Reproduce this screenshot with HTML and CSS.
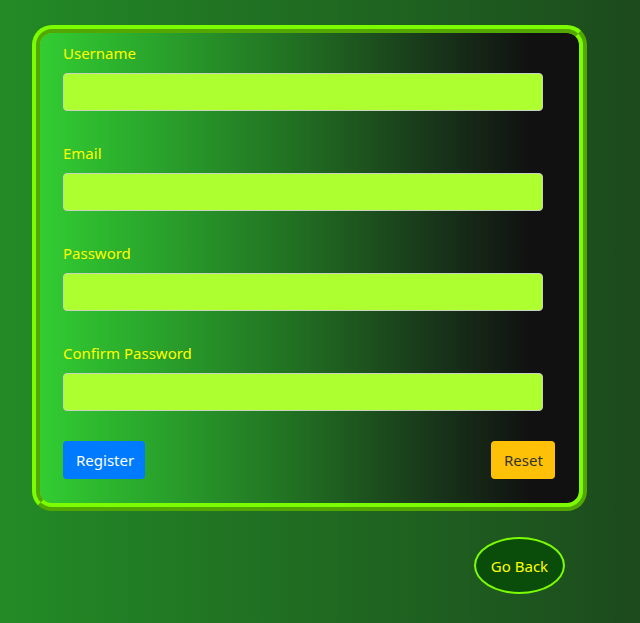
FILE: index.html
```html
<!DOCTYPE html>
<html>
<head>
<meta charset="utf-8">
<link rel="stylesheet" href="styles.css">
</head>
<body>
<div class="page">
  <form class="card">
    <label class="label">Username</label>
    <input class="field" type="text">
    <label class="label">Email</label>
    <input class="field" type="email">
    <label class="label">Password</label>
    <input class="field" type="password">
    <label class="label">Confirm Password</label>
    <input class="field" type="password">
    <div class="actions">
      <button type="button" class="btn btn-register">Register</button>
      <button type="button" class="btn btn-reset">Reset</button>
    </div>
  </form>
  <div class="back-row">
    <button type="button" class="back">Go Back</button>
  </div>
</div>
</body>
</html>
```
FILE: styles.css
```css
html, body {
  margin: 0;
  padding: 0;
  height: 100%;
}
body {
  background: linear-gradient(to right, #238b26, #1c4a1d);
  font-family: "Noto Sans", "Open Sans", sans-serif;
  font-size: 15px;
}
.page {
  padding: 25px 0 0 32px;
}
.card {
  box-sizing: border-box;
  width: 555px;
  height: 486px;
  border: 8px ridge #7cfc00;
  border-radius: 20px;
  background: linear-gradient(to right, #32cd32 0%, #2aa52c 21%, #216e22 48%, #183419 74%, #111 91%, #111 100%);
  padding: 10px 24px 0 23px;
  display: flex;
  flex-direction: column;
  align-items: flex-start;
}
.label {
  color: #ffff00;
  line-height: 20px;
  height: 20px;
  margin-bottom: 10px;
}
.field {
  box-sizing: border-box;
  width: 480px;
  height: 38px;
  margin: 0 0 32px 0;
  background: #adff2f;
  border: 1px solid #c8d2c0;
  border-radius: 4px;
  padding: 0 10px;
}
.field:last-of-type {
  margin-bottom: 30px;
}
.actions {
  display: flex;
  justify-content: space-between;
  width: 100%;
}
.btn {
  height: 38px;
  border: 1px solid transparent;
  border-radius: 4px;
  font-family: inherit;
  font-size: 15px;
  padding: 0 12px;
}
.btn-register {
  width: 82px;
  background: #007bff;
  color: #fff;
}
.btn-reset {
  width: 64px;
  background: #ffc107;
  color: #333;
}
.back-row {
  padding: 26px 0 0 442px;
}
.back {
  width: 91px;
  height: 57px;
  border-radius: 50%;
  border: 2px solid #7cfc00;
  background: #0a4d0a;
  color: #ffff00;
  font-family: inherit;
  font-size: 15px;
  padding: 0;
}
```
